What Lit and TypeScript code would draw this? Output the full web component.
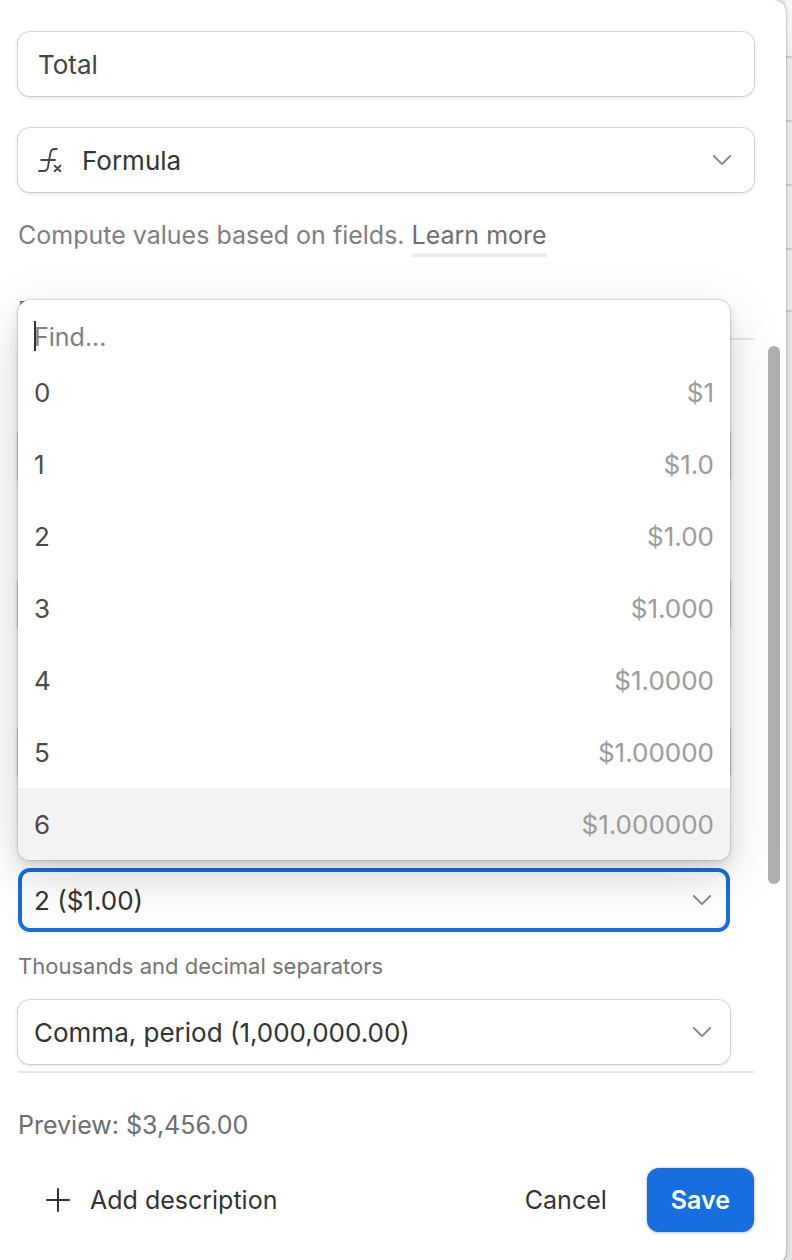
import { LitElement, html, css } from "lit";
import { customElement, state } from "lit/decorators.js";

const chevron = html`<svg class="chevron" viewBox="0 0 24 24" aria-hidden="true">
  <path d="M3.8 8 L12 16.2 L20.2 8" fill="none" stroke="currentColor" stroke-width="1.9" stroke-linecap="round" stroke-linejoin="round"></path>
</svg>`;

const formulaIcon = html`<svg class="lead" viewBox="0 0 24 24" aria-hidden="true">
  <g fill="none" stroke="currentColor" stroke-linecap="round">
    <path d="M18.8 1 H16.6 C13.9 1 12.9 2.2 12.4 5 L10 19 C9.5 21.8 8.4 23 5.6 23 H1" stroke-width="1.9"></path>
    <path d="M3.2 12 H17" stroke-width="1.9"></path>
    <path d="M16.6 17.6 L22.4 23.2 M22.4 17.6 L16.6 23.2" stroke-width="1.9"></path>
  </g>
</svg>`;

const plusIcon = html`<svg class="plus" viewBox="0 0 24 24" aria-hidden="true">
  <path d="M12 1 V23 M1 12 H23" fill="none" stroke="currentColor" stroke-width="2" stroke-linecap="round"></path>
</svg>`;

@customElement("app-root")
export class AppRoot extends LitElement {
  @state() private active = 6;

  private precisions = [0, 1, 2, 3, 4, 5, 6];

  static styles = css`
    :host {
      display: grid;
      grid-template-columns: minmax(0, 1fr) 6px;
      height: 100vh;
      overflow: hidden;
      background: #ececec;
      color: #333;
      font-family: Inter, "Liberation Sans", sans-serif;
      font-size: 25px;
    }
    * { box-sizing: border-box; }
    input, select, button {
      font: inherit;
      color: inherit;
      margin: 0;
      border: 0;
      outline: 0;
      background: none;
    }
    .panel {
      position: relative;
      z-index: 1;
      align-self: start;
      padding: 32px 32px 32px 18px;
      background: #fff;
      border-radius: 0 12px 12px 0;
      box-shadow: 0 0 2px rgba(0, 0, 0, 0.45), 0 4px 8px rgba(0, 0, 0, 0.08), 0 32px 32px rgba(0, 0, 0, 0.08);
    }
    .rows { min-width: 0; }
    .row {
      height: 64px;
      background: #f2f2f2;
      border-bottom: 2px solid #cfd1d3;
    }
    .row:first-child { height: 58px; background: #f8f8f8; }
    .row:last-child { height: 62px; }
    .box {
      display: block;
      width: 100%;
      height: 64px;
      padding: 0 20px;
      border-radius: 12px;
      font-size: 26px;
      background: #fff;
      box-shadow: 0 0 0 1px rgba(0, 0, 0, 0.12), 0 1px 4px rgba(0, 0, 0, 0.14);
    }
    .name { color: #444; }
    .pick { display: grid; align-items: center; }
    .pick > * { grid-area: 1 / 1; }
    .pick select { appearance: none; padding-right: 56px; }
    .type { margin-top: 32px; }
    .type select { padding-left: 64px; }
    .chevron {
      width: 24px;
      height: 24px;
      justify-self: end;
      margin-right: 20px;
      color: #888;
      pointer-events: none;
      z-index: 1;
    }
    .lead {
      width: 24px;
      height: 24px;
      margin-left: 20px;
      color: #444;
      pointer-events: none;
      z-index: 1;
    }
    .help { margin: 24px 0 0; line-height: 38px; color: #7f7f7f; }
    .help a {
      color: #6e6e6e;
      text-decoration: none;
      padding-bottom: 3px;
      border-bottom: 4px solid #eee;
    }
    .tabs {
      margin-top: 34px;
      padding-bottom: 4px;
      line-height: 46px;
      border-bottom: 2px solid #e6e6e6;
      color: #666;
    }
    .scroller {
      display: grid;
      grid-template-columns: minmax(0, 1fr) 12px;
      column-gap: 38px;
      margin-right: -26px;
      padding-bottom: 7px;
    }
    .track { padding-top: 6px; }
    .thumb {
      width: 12px;
      height: 538px;
      border-radius: 6px;
      background: #aeaeae;
      position: relative;
      z-index: 4;
    }
    .spaced { padding-top: 84px; }
    .options select { padding-left: 16px; }
    .options .chevron { margin-right: 16px; }
    .label {
      display: block;
      line-height: 68px;
      font-size: 22px;
      color: #757575;
    }
    .anchor { position: relative; }
    .anchor select { box-shadow: inset 0 0 0 4px #166ee1; }
    .popover {
      position: absolute;
      z-index: 3;
      left: 0;
      right: 0;
      bottom: calc(100% + 8px);
      border-radius: 12px;
      background: #fff;
      box-shadow: 0 0 2px rgba(0, 0, 0, 0.4), 0 4px 8px rgba(0, 0, 0, 0.1), 0 16px 64px rgba(0, 0, 0, 0.1), 0 16px 32px rgba(0, 0, 0, 0.08);
    }
    .find { position: relative; height: 56px; padding-top: 16px; }
    .find input { display: block; width: 100%; height: 40px; padding: 2px 16px 0; }
    .find input::placeholder { color: #7f7f7f; opacity: 1; }
    .caret {
      position: absolute;
      left: 16px;
      bottom: 5px;
      width: 2px;
      height: 30px;
      background: #333;
    }
    .list { list-style: none; margin: 0; padding: 0; }
    .item {
      display: flex;
      justify-content: space-between;
      align-items: center;
      width: 100%;
      height: 72px;
      padding: 0 16px;
      font-size: 26px;
      color: #4a4a4a;
    }
    .item.active { background: #f3f3f3; }
    li:last-child .item { border-radius: 0 0 12px 12px; }
    .sample { color: #9c9c9c; }
    .preview {
      margin: 0;
      padding: 32px 0 23px;
      line-height: 40px;
      color: #6e6e6e;
      border-top: 2px solid #e6e6e6;
    }
    .footer { display: flex; align-items: center; }
    .footer button { height: 64px; cursor: pointer; }
    .add { display: flex; align-items: center; gap: 20px; padding: 0 28px; margin-right: auto; }
    .plus { width: 24px; height: 24px; }
    .cancel { padding: 0 24px; margin-right: 16px; }
    .footer .save {
      padding: 0 24px;
      border-radius: 12px;
      background: #166ee1;
      color: #fff;
      font-weight: 600;
      box-shadow: 0 0 2px rgba(0, 0, 0, 0.3), 0 1px 4px rgba(0, 0, 0, 0.14);
    }
  `;

  private sample(n: number) {
    return n === 0 ? "$1" : `$${(1).toFixed(n)}`;
  }

  render() {
    return html`
      <section class="panel">
        <input class="box name" aria-label="Field name" .value=${"Total"} />
        <div class="pick type">
          <select class="box" aria-label="Field type"><option>Formula</option></select>
          ${formulaIcon}${chevron}
        </div>
        <p class="help">Compute values based on fields. <a href="#">Learn more</a></p>
        <div class="tabs">Formatting</div>

        <div class="scroller">
          <div class="options">
            ${["Format", "Currency symbol", "Abbreviation"].map(
              (name) => html`<div class="spaced"><select class="box" aria-label=${name}></select></div>`
            )}
            <div class="spaced">
              <div class="pick anchor">
                <select class="box" aria-label="Precision"><option>2 ($1.00)</option></select>
                ${chevron}
                <div class="popover">
                  <div class="find">
                    <input placeholder="Find..." aria-label="Find an option" />
                    <span class="caret"></span>
                  </div>
                  <ul class="list">
                    ${this.precisions.map(
                      (n) => html`<li>
                        <button
                          class="item ${n === this.active ? "active" : ""}"
                          @mouseenter=${() => (this.active = n)}
                        >
                          <span>${n}</span><span class="sample">${this.sample(n)}</span>
                        </button>
                      </li>`
                    )}
                  </ul>
                </div>
              </div>
            </div>
            <label class="label" for="separators">Thousands and decimal separators</label>
            <div class="pick">
              <select class="box" id="separators"><option>Comma, period (1,000,000.00)</option></select>
              ${chevron}
            </div>
          </div>
          <div class="track"><div class="thumb"></div></div>
        </div>

        <p class="preview">Preview: $3,456.00</p>
        <div class="footer">
          <button class="add">${plusIcon}<span>Add description</span></button>
          <button class="cancel">Cancel</button>
          <button class="save">Save</button>
        </div>
      </section>
      <div class="rows">${[0, 1, 2, 3, 4].map(() => html`<div class="row"></div>`)}</div>
    `;
  }
}
